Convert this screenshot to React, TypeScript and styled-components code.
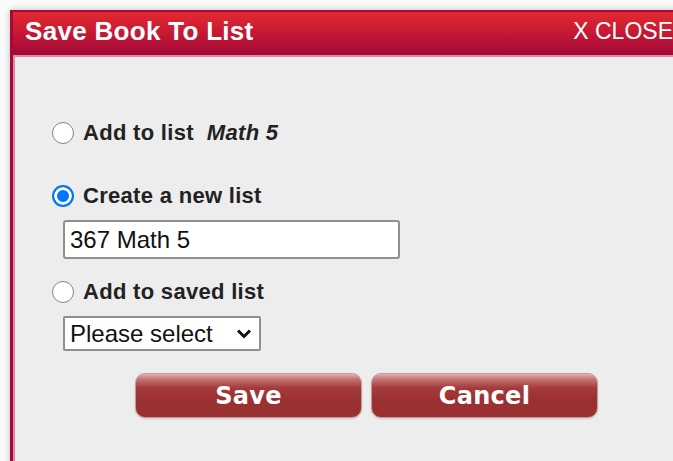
import React from 'react'
import styled, { createGlobalStyle, css } from 'styled-components'

const GlobalStyle = createGlobalStyle`
  html, body {
    margin: 0;
    padding: 0;
    background: #fafafa;
    overflow: hidden;
  }
`

const Page = styled.div`
  padding: 10px 0 0 10px;
  width: 673px;
  height: 461px;
  box-sizing: border-box;
  overflow: hidden;
`

const Dialog = styled.div`
  width: 700px;
  height: 480px;
  box-sizing: border-box;
  border: 3px solid #a50a3a;
  border-top-width: 2px;
  background: #ededed;
  box-shadow: 0 0 6px rgba(0, 0, 0, 0.25);
  display: flex;
  flex-direction: column;
`

const Header = styled.div`
  height: 43px;
  flex: none;
  display: flex;
  align-items: center;
  justify-content: space-between;
  padding: 0 0 0 12px;
  background: linear-gradient(to bottom, #e3292f 0%, #c81a33 45%, #a3073a 100%);
  border-bottom: 2px solid #e38a9c;
  font-family: 'Liberation Sans', Arial, sans-serif;
  color: #ffffff;
`

const Title = styled.div`
  font-size: 26px;
  font-weight: 700;
  letter-spacing: 0.3px;
  margin-top: -4px;
`

const CloseLink = styled.a`
  font-size: 23px;
  margin-right: 34px;
  margin-top: -4px;
  cursor: pointer;
`

const Body = styled.div`
  flex: 1;
  border-left: 2px solid #e38a9c;
  padding: 61px 0 0 37px;
  font-family: 'Liberation Sans', Arial, sans-serif;
  color: #222222;
`

const OptionRow = styled.label<{ $gap: number }>`
  display: flex;
  align-items: center;
  height: 30px;
  margin-top: ${(p) => p.$gap}px;
  font-size: 22px;
  font-weight: 700;
  letter-spacing: 0.3px;
  cursor: pointer;
`

const Radio = styled.span<{ $checked?: boolean }>`
  width: 22px;
  height: 22px;
  box-sizing: border-box;
  border-radius: 50%;
  margin-right: 9px;
  flex: none;
  ${(p) =>
    p.$checked
      ? css`
          border: 2px solid #0075ff;
          background: #0075ff;
          box-shadow: inset 0 0 0 3px #ffffff;
        `
      : css`
          border: 1.5px solid #858585;
          background: #ffffff;
        `}
`

const ListName = styled.em`
  font-style: italic;
  margin-left: 13px;
`

const TextField = styled.input`
  display: block;
  margin: 9px 0 0 11px;
  width: 337px;
  height: 39px;
  box-sizing: border-box;
  border: 2px solid #8f8f8f;
  border-radius: 3px;
  padding: 0 5px;
  font-family: 'Liberation Sans', Arial, sans-serif;
  font-size: 24px;
  color: #111111;
  background: #ffffff;
`

const SelectWrap = styled.div`
  position: relative;
  margin: 9px 0 0 11px;
  width: 198px;
  height: 35px;
`

const Select = styled.select`
  appearance: none;
  width: 100%;
  height: 100%;
  box-sizing: border-box;
  border: 2px solid #8f8f8f;
  border-radius: 2px;
  padding: 0 0 0 5px;
  font-family: 'Liberation Sans', Arial, sans-serif;
  font-size: 24px;
  color: #111111;
  background: #ffffff;
`

const Chevron = styled.svg`
  position: absolute;
  right: 9px;
  top: 12px;
  pointer-events: none;
`

const ButtonRow = styled.div`
  display: flex;
  gap: 9px;
  margin: 22px 0 0 83px;
`

const Button = styled.button`
  width: 227px;
  height: 45px;
  box-sizing: border-box;
  border: 1px solid #c99a9a;
  border-radius: 10px;
  background: linear-gradient(
    to bottom,
    #e2b3b3 0%,
    #c47474 12%,
    #a53a3c 32%,
    #9b3032 60%,
    #993032 100%
  );
  box-shadow: 0 1px 2px rgba(0, 0, 0, 0.15);
  color: #ffffff;
  font-family: 'DejaVu Sans', Verdana, sans-serif;
  font-size: 24px;
  font-weight: 700;
  letter-spacing: 0.3px;
  padding: 0;
  cursor: pointer;
`

export default function App() {
  return (
    <>
      <GlobalStyle />
      <Page>
        <Dialog>
          <Header>
            <Title>Save Book To List</Title>
            <CloseLink>X CLOSE</CloseLink>
          </Header>
          <Body>
            <OptionRow $gap={0}>
              <Radio />
              Add to list
              <ListName>Math 5</ListName>
            </OptionRow>
            <OptionRow $gap={33}>
              <Radio $checked />
              Create a new list
            </OptionRow>
            <TextField defaultValue="367 Math 5" />
            <OptionRow $gap={18}>
              <Radio />
              Add to saved list
            </OptionRow>
            <SelectWrap>
              <Select defaultValue="">
                <option value="">Please select</option>
              </Select>
              <Chevron width="16" height="11" viewBox="0 0 16 11">
                <path d="M2 2.5 L8 8.5 L14 2.5" fill="none" stroke="#111" strokeWidth="3" />
              </Chevron>
            </SelectWrap>
            <ButtonRow>
              <Button>Save</Button>
              <Button>Cancel</Button>
            </ButtonRow>
          </Body>
        </Dialog>
      </Page>
    </>
  )
}
